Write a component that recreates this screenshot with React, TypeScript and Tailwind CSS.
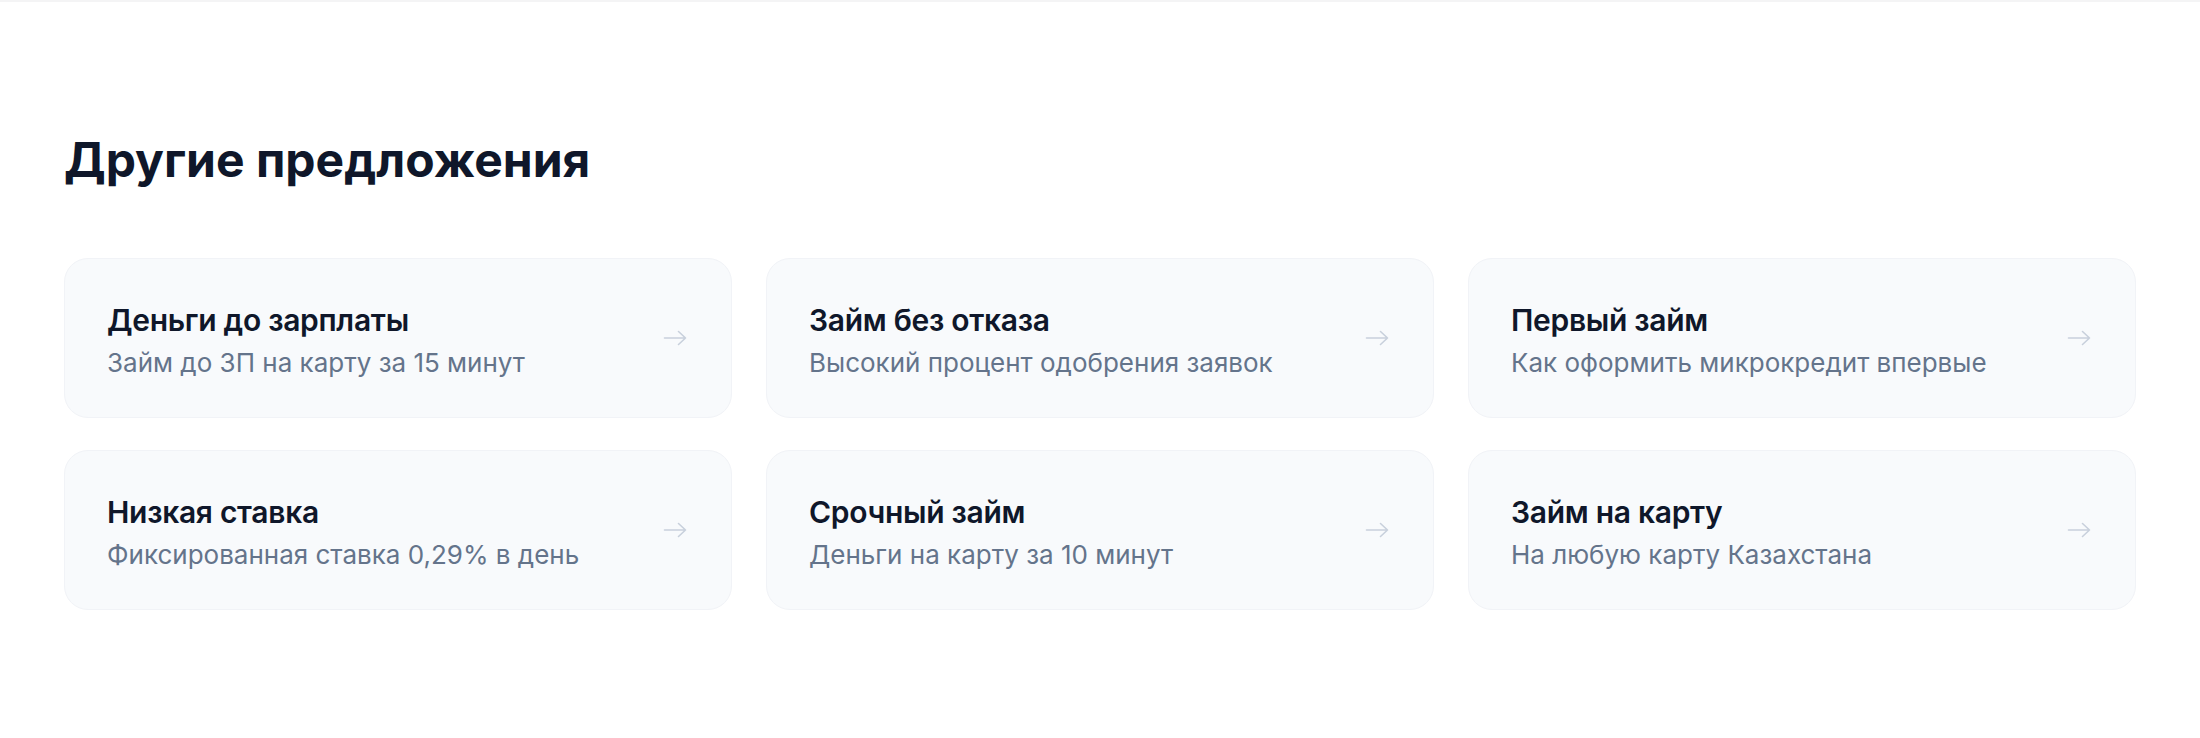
interface Offer {
  title: string;
  subtitle: string;
}

const offers: Offer[] = [
  { title: 'Деньги до зарплаты', subtitle: 'Займ до ЗП на карту за 15 минут' },
  { title: 'Займ без отказа', subtitle: 'Высокий процент одобрения заявок' },
  { title: 'Первый займ', subtitle: 'Как оформить микрокредит впервые' },
  { title: 'Низкая ставка', subtitle: 'Фиксированная ставка 0,29% в день' },
  { title: 'Срочный займ', subtitle: 'Деньги на карту за 10 минут' },
  { title: 'Займ на карту', subtitle: 'На любую карту Казахстана' },
];

function Arrow() {
  return (
    <svg
      width="24"
      height="16"
      viewBox="0 0 24 16"
      fill="none"
      stroke="currentColor"
      strokeWidth="1.6"
      strokeLinecap="round"
      strokeLinejoin="round"
      className="text-[#c8d0dc]"
    >
      <path d="M1.5 8H22.5M15.5 1.5L22.5 8L15.5 14.5" />
    </svg>
  );
}

function OfferCard({ offer }: { offer: Offer }) {
  return (
    <a
      href="#"
      className="flex h-[160px] items-center justify-between rounded-[24px] border border-[#f1f3f7] bg-[#f8fafc] pl-[42px] pr-[44px]"
    >
      <div className="flex flex-col pt-[4px]">
        <span className="text-[30px] font-semibold leading-[38px] tracking-[-0.01em] text-[#0f172a]">
          {offer.title}
        </span>
        <span className="mt-[6px] text-[26px] leading-[35px] text-[#64748b]">{offer.subtitle}</span>
      </div>
      <Arrow />
    </a>
  );
}

export default function App() {
  return (
    <div className="min-h-[738px] w-full bg-white font-['Inter',sans-serif]">
      <div className="h-[2px] w-full bg-[#f4f4f5]" />
      <section className="px-[64px] pt-[129px] pb-[128px]">
        <h2 className="text-[48px] font-bold leading-[58px] text-[#0f172a]">
          Другие предложения
        </h2>
        <div className="mt-[69px] grid grid-cols-3 gap-x-[34px] gap-y-[32px]">
          {offers.map((offer) => (
            <OfferCard key={offer.title} offer={offer} />
          ))}
        </div>
      </section>
    </div>
  );
}
